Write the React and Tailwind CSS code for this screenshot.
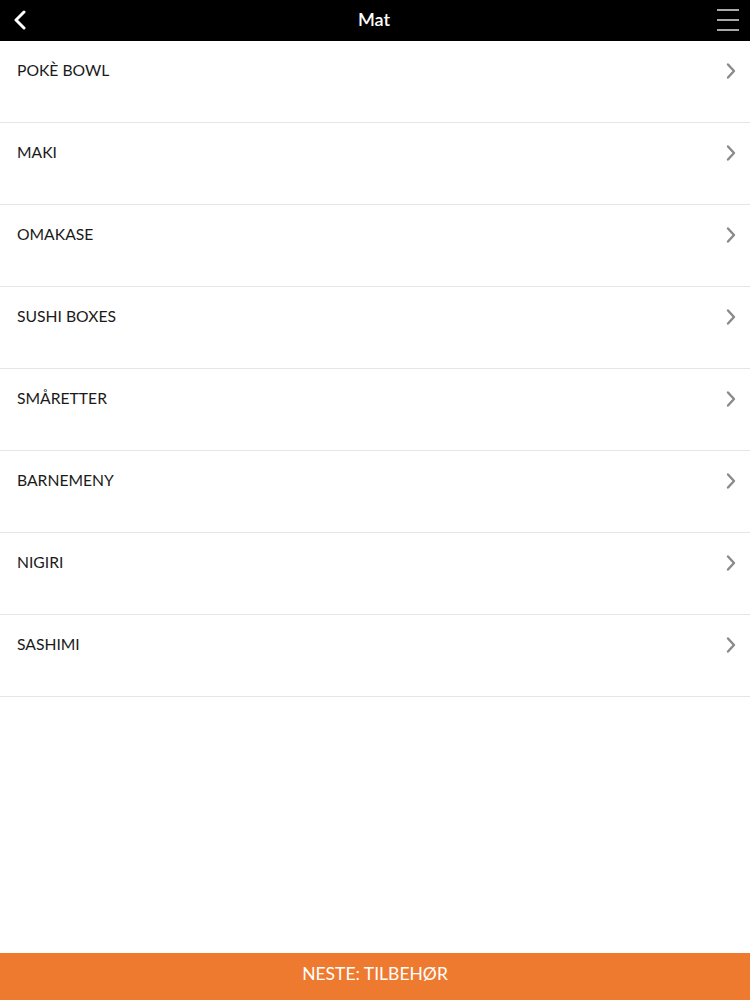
import React from "react";

const items = ["POKÈ BOWL", "MAKI", "OMAKASE", "SUSHI BOXES", "SMÅRETTER", "BARNEMENY", "NIGIRI", "SASHIMI"];

export default function App() {
  return (
    <div className="w-[750px] h-[1000px] flex flex-col bg-white" style={{ fontFamily: "Lato, 'Open Sans', sans-serif" }}>
      <div className="h-[41px] bg-black flex items-center justify-between px-3 shrink-0">
        <svg width="16" height="20" viewBox="0 0 16 20" className="mt-[-2px]">
          <path d="M12 2 L4 10 L12 18" stroke="white" strokeWidth="3" fill="none" strokeLinecap="round" strokeLinejoin="round" />
        </svg>
        <div className="text-white text-[18px] font-semibold leading-none mt-[-3px] ml-[4px]">Mat</div>
        <svg width="24" height="26" viewBox="0 0 24 26" className="mr-[-2px] mt-[-2px]">
          <line x1="1" y1="3" x2="23" y2="3" stroke="#d4d4d4" strokeWidth="1.6" />
          <line x1="1" y1="13" x2="23" y2="13" stroke="#d4d4d4" strokeWidth="1.6" />
          <line x1="1" y1="23" x2="23" y2="23" stroke="#d4d4d4" strokeWidth="1.6" />
        </svg>
      </div>
      <div className="flex-1 flex flex-col">
        {items.map((t) => (
          <div key={t} className="h-[82px] border-b border-[#e6e6e6] flex items-start justify-between pl-[17px] pr-[13px] pt-[19px]">
            <span className="text-[15.7px] text-[#1a1a1a] leading-[20px]">{t}</span>
            <svg width="12" height="18" viewBox="0 0 12 18" className="mt-[2px]">
              <path d="M3 2.5 L9 9 L3 15.5" stroke="#8a8a8a" strokeWidth="2.4" fill="none" strokeLinecap="round" strokeLinejoin="round" />
            </svg>
          </div>
        ))}
      </div>
      <div className="h-[47px] bg-[#ee7a30] flex items-center justify-center shrink-0">
        <span className="text-white text-[17.5px] leading-none mt-[-5px]">NESTE: TILBEHØR</span>
      </div>
    </div>
  );
}
